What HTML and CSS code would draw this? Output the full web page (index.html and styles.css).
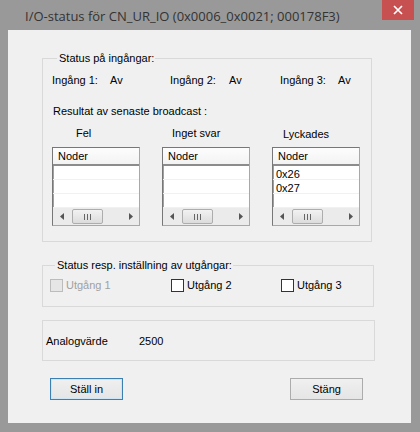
FILE: index.html
```html
<!DOCTYPE html>
<html lang="sv">
<head>
  <meta charset="UTF-8">
  <title>I/O-status</title>
  <link rel="stylesheet" href="styles.css">
</head>
<body>
  <div class="window">
    <div class="titlebar">
      <span class="title">I/O-status för CN_UR_IO (0x0006_0x0021; 000178F3)</span>
      <span class="close">
        <svg width="10" height="10" viewBox="0 0 10 10"><path d="M1 1L9 9M9 1L1 9" stroke="#fff" stroke-width="1.7"/></svg>
      </span>
    </div>

    <div class="client">
      <fieldset class="group group-in">
        <legend>Status på ingångar:</legend>
        <div class="inputs">
          <div class="pin pin-1"><span class="pin-label">Ingång 1:</span><span>Av</span></div>
          <div class="pin pin-2"><span class="pin-label">Ingång 2:</span><span>Av</span></div>
          <div class="pin"><span class="pin-label">Ingång 3:</span><span>Av</span></div>
        </div>

        <div class="bc-title">Resultat av senaste broadcast :</div>

        <div class="lists">
          <div class="col">
            <div class="cap cap-fel">Fel</div>
            <div class="listbox">
              <div class="lb-head">Noder</div>
              <div class="lb-row"></div>
              <div class="lb-row"></div>
              <div class="lb-row"></div>
              <div class="hscroll">
                <span class="arrow"><svg width="4" height="7" viewBox="0 0 4 7"><path d="M4 0L0 3.5L4 7Z" fill="#555"/></svg></span>
                <span class="thumb"><span class="grip"></span></span>
                <span class="arrow arrow-r"><svg width="4" height="7" viewBox="0 0 4 7"><path d="M0 0L4 3.5L0 7Z" fill="#555"/></svg></span>
              </div>
            </div>
          </div>

          <div class="col">
            <div class="cap cap-svar">Inget svar</div>
            <div class="listbox">
              <div class="lb-head">Noder</div>
              <div class="lb-row"></div>
              <div class="lb-row"></div>
              <div class="lb-row"></div>
              <div class="hscroll">
                <span class="arrow"><svg width="4" height="7" viewBox="0 0 4 7"><path d="M4 0L0 3.5L4 7Z" fill="#555"/></svg></span>
                <span class="thumb"><span class="grip"></span></span>
                <span class="arrow arrow-r"><svg width="4" height="7" viewBox="0 0 4 7"><path d="M0 0L4 3.5L0 7Z" fill="#555"/></svg></span>
              </div>
            </div>
          </div>

          <div class="col col-ok">
            <div class="cap cap-ok">Lyckades</div>
            <div class="listbox">
              <div class="lb-head">Noder</div>
              <div class="lb-row">0x26</div>
              <div class="lb-row">0x27</div>
              <div class="lb-row"></div>
              <div class="hscroll">
                <span class="arrow"><svg width="4" height="7" viewBox="0 0 4 7"><path d="M4 0L0 3.5L4 7Z" fill="#555"/></svg></span>
                <span class="thumb"><span class="grip"></span></span>
                <span class="arrow arrow-r"><svg width="4" height="7" viewBox="0 0 4 7"><path d="M0 0L4 3.5L0 7Z" fill="#555"/></svg></span>
              </div>
            </div>
          </div>
        </div>
      </fieldset>

      <fieldset class="group group-out">
        <legend>Status resp. inställning av utgångar:</legend>
        <div class="outputs">
          <label class="check check-1 disabled"><span class="box"></span>Utgång 1</label>
          <label class="check check-2"><span class="box"></span>Utgång 2</label>
          <label class="check"><span class="box"></span>Utgång 3</label>
        </div>
      </fieldset>

      <div class="group group-analog">
        <span class="analog-label">Analogvärde</span>
        <span>2500</span>
      </div>

      <div class="buttons">
        <button class="btn btn-default">Ställ in</button>
        <button class="btn">Stäng</button>
      </div>
    </div>
  </div>
</body>
</html>
```

FILE: styles.css
```css
:root {
  --frame: #999999;
  --face: #f0f0f0;
  --etch: #d9d9d9;
  --text: #000;
}

body {
  margin: 0;
  font-family: "Liberation Sans", Arial, sans-serif;
  font-size: 11px;
  line-height: 13px;
  color: var(--text);
}
.window {
  width: 420px;
  height: 432px;
  background: var(--frame);
  display: flex;
  flex-direction: column;
}
.titlebar {
  height: 30px;
  display: flex;
  justify-content: space-between;
  align-items: flex-start;
}
.title {
  font-family: "Open Sans", "Noto Sans", sans-serif;
  font-size: 13px;
  line-height: 20px;
  color: #333;
  padding: 6px 0 0 25px;
}
.close {
  width: 32px;
  height: 20px;
  margin-right: 6px;
  background: #c75050;
  display: flex;
  align-items: center;
  justify-content: center;
}
.client {
  flex: 1;
  margin: 0 9px 9px 8px;
  background: var(--face);
  padding: 22px 0 0 34px;
}

/* group boxes */
.group {
  box-sizing: border-box;
  margin: 0;
  padding: 0;
  border: 1px solid var(--etch);
  min-width: 0;
}
.group legend {
  margin-left: 5px;
  padding: 0 1px 0 2px;
}
.group-in {
  width: 330px;
  padding: 0 0 15px 9px;
}
.group-out {
  width: 332px;
  margin-top: 17px;
  padding: 6px 0 14px 7px;
}
.group-analog {
  width: 333px;
  height: 41px;
  margin-top: 13px;
  padding: 14px 0 0 3px;
  display: flex;
}

.inputs {
  display: flex;
  margin-top: 9px;
}
.pin { display: flex; }
.pin-1 { width: 118px; }
.pin-2 { width: 110px; }
.pin-label { width: 58px; }
.pin-2 .pin-label { width: 59px; }

.bc-title {
  margin: 18px 0 0 1px;
}

.lists {
  display: flex;
  gap: 22px;
  margin-top: 9px;
}
.col-ok { padding-top: 1px; }
.cap { height: 13px; margin-bottom: 7px; }
.cap-fel { padding-left: 24px; }
.cap-svar { padding-left: 10px; }
.cap-ok { padding-left: 11px; margin-bottom: 6px; }

/* list boxes */
.listbox {
  width: 88px;
  box-sizing: border-box;
  border: 1px solid;
  border-color: #777 #a8a8a8 #a8a8a8 #777;
  box-shadow: inset 1px 1px 0 #a0a0a0;
  background: #fff;
}
.lb-head {
  height: 16px;
  line-height: 17px;
  padding-left: 5px;
  background: linear-gradient(#fdfdfd, #f3f3f3);
  border-bottom: 2px solid #8c8c8c;
}
.lb-row {
  box-sizing: border-box;
  height: 14px;
  line-height: 13px;
  padding: 2px 0 0 3px;
  border-bottom: 1px solid #f1f1f1;
}
.hscroll {
  height: 17px;
  background: #ebebeb;
  display: flex;
  align-items: center;
}
.arrow {
  width: 17px;
  display: flex;
  justify-content: center;
}
.arrow-r { margin-left: auto; }
.thumb {
  box-sizing: border-box;
  width: 31px;
  height: 15px;
  margin-left: 2px;
  border: 1px solid #adadad;
  border-radius: 2px;
  background: linear-gradient(#f2f2f2, #dcdcdc);
  display: flex;
  align-items: center;
  justify-content: center;
}
.grip {
  width: 5px;
  height: 6px;
  border-left: 1px solid #666;
  border-right: 1px solid #666;
  background: linear-gradient(90deg, transparent 2px, #666 2px, #666 3px, transparent 3px);
}

/* check boxes */
.outputs { display: flex; }
.check {
  display: flex;
  align-items: center;
  height: 14px;
}
.check-1 { width: 121px; }
.check-2 { width: 110px; }
.box {
  box-sizing: border-box;
  width: 13px;
  height: 13px;
  border: 1px solid #333;
  background: #fff;
  margin-right: 3px;
}
.disabled { color: #a0a0a0; }
.disabled .box {
  border-color: #bcbcbc;
  background: #e6e6e6;
}

.analog-label { width: 93px; }

/* buttons */
.buttons {
  display: flex;
  gap: 167px;
  margin: 17px 0 0 8px;
}
.btn {
  width: 73px;
  height: 22px;
  padding: 0;
  font: inherit;
  color: var(--text);
  border: 1px solid #acacac;
  background: linear-gradient(#f0f0f0, #e5e5e5);
}
.btn-default {
  border-color: #3c7fb1;
  box-shadow: inset 0 0 0 1px #cde6f7;
}
```
